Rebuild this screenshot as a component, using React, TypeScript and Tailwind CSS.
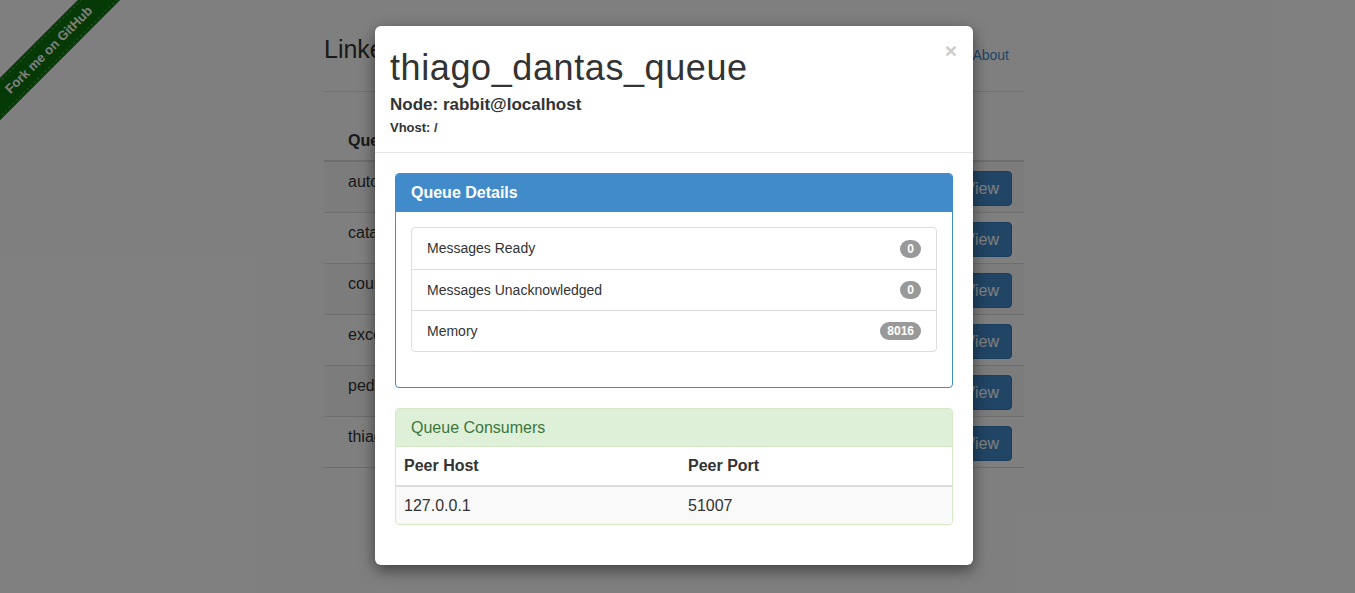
const queues = [
  "auto_complete_queue",
  "catalog_queue",
  "counter_queue",
  "exceptions_queue",
  "pedidos_queue",
  "thiago_dantas_queue",
];

const details = [
  { label: "Messages Ready", value: "0" },
  { label: "Messages Unacknowledged", value: "0" },
  { label: "Memory", value: "8016" },
];

const App = () => {
  return (
    <div
      className="relative w-[1355px] h-[593px] overflow-hidden bg-white text-[#333]"
      style={{ fontFamily: '"Liberation Sans", Arial, sans-serif' }}
    >
      {/* page behind the modal */}
      <div className="ml-[324px] w-[700px]">
        <div className="flex items-start justify-between pt-[29px] pb-[22px] border-b border-[#e5e5e5]">
          <h3 className="text-[25px] leading-[40px] font-medium">Linked Queues</h3>
          <a className="mt-[16px] px-[15px] text-[14px] leading-[20px] text-[#428bca]">About</a>
        </div>
        <div className="mt-[30px]">
          <div className="flex items-end h-[40px] pl-[24px] pb-[8px] leading-[22px] border-b-2 border-[#ddd] text-[16px] font-bold">
            Queue
          </div>
          {queues.map((q, i) => (
            <div
              key={q}
              className={
                "flex items-start justify-between h-[51px] pt-[9px] pl-[24px] pr-[12px] border-b border-[#ddd] text-[16px] leading-[22px] " +
                (i % 2 === 0 ? "bg-[#f9f9f9]" : "bg-white")
              }
            >
              <span>{q}</span>
              <button className="h-[35px] px-[12px] rounded-[4px] bg-[#428bca] border border-[#357ebd] text-white text-[16px]">
                View
              </button>
            </div>
          ))}
        </div>
      </div>

      {/* fork me ribbon */}
      <div className="absolute left-[-51px] top-[35px] w-[200px] h-[30px] -rotate-45 bg-[#0a720a] flex items-center justify-center">
        <div className="w-full h-[26px] border-y border-dashed border-white/30 flex items-center justify-center text-white text-[13px] font-bold">
          Fork me on GitHub
        </div>
      </div>

      {/* backdrop */}
      <div className="absolute inset-0 bg-black/50" />

      {/* modal */}
      <div className="absolute left-[375px] top-[26px] w-[598px] bg-white rounded-[6px] shadow-[0_5px_15px_rgba(0,0,0,0.5)]">
        <div className="relative px-[15px] pt-[22px] pb-[16px] border-b border-[#e5e5e5]">
          <button className="absolute right-[16px] top-[14px] text-[21px] font-bold leading-none text-[#ccc]">
            ×
          </button>
          <h1 className="text-[36px] leading-[40px] tracking-[0.6px]">thiago_dantas_queue</h1>
          <h4 className="mt-[7px] text-[17px] leading-[20px] font-bold">Node: rabbit@localhost</h4>
          <h6 className="mt-[5px] text-[13px] leading-[16px] font-bold">Vhost: /</h6>
        </div>

        <div className="p-[20px] pb-[40px]">
          <div className="border border-[#428bca] rounded-[4px] overflow-hidden">
            <div className="bg-[#428bca] px-[15px] h-[38px] flex items-center text-white text-[16px] font-bold">
              Queue Details
            </div>
            <div className="p-[15px] pb-[35px]">
              <div className="border border-[#ddd] rounded-[4px]">
                {details.map((d, i) => (
                  <div
                    key={d.label}
                    className={
                      "flex items-center justify-between h-[41px] px-[15px] text-[14px] " +
                      (i > 0 ? "border-t border-[#ddd]" : "")
                    }
                  >
                    <span>{d.label}</span>
                    <span className="min-w-[21px] h-[18px] px-[7px] rounded-[10px] bg-[#999] text-white text-[12px] font-bold flex items-center justify-center">
                      {d.value}
                    </span>
                  </div>
                ))}
              </div>
            </div>
          </div>

          <div className="mt-[20px] border border-[#d6e9c6] rounded-[4px] overflow-hidden">
            <div className="bg-[#dff0d8] px-[15px] h-[38px] flex items-center border-b border-[#d6e9c6] text-[#3c763d] text-[16px]">
              Queue Consumers
            </div>
            <div className="grid grid-cols-[284px_1fr] text-[16px]">
              <div className="px-[8px] py-[8px] leading-[22px] font-bold border-b-2 border-[#ddd]">Peer Host</div>
              <div className="px-[8px] py-[8px] leading-[22px] font-bold border-b-2 border-[#ddd]">Peer Port</div>
              <div className="px-[8px] py-[8px] leading-[21px] bg-[#f9f9f9]">127.0.0.1</div>
              <div className="px-[8px] py-[8px] leading-[21px] bg-[#f9f9f9]">51007</div>
            </div>
          </div>
        </div>
      </div>
    </div>
  );
};

export default App;
